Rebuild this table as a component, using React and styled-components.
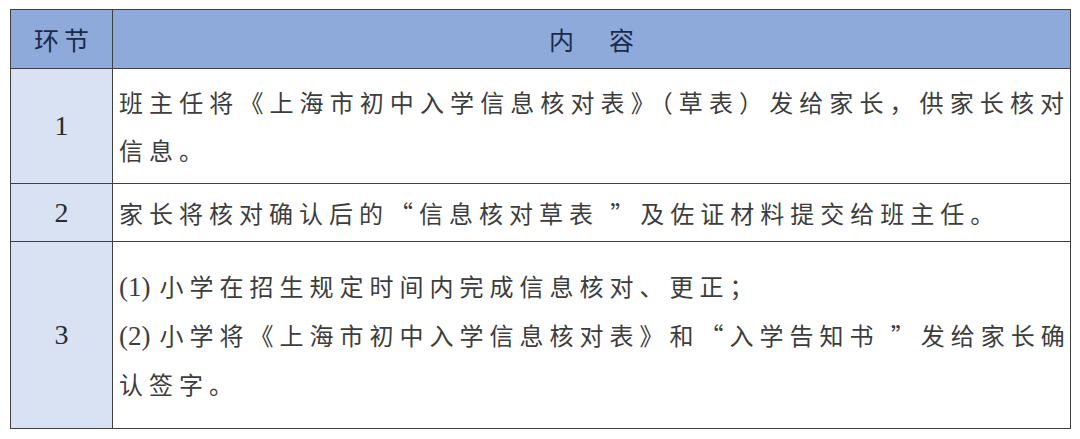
import React from 'react';
import styled, { createGlobalStyle } from 'styled-components';

const GlobalStyle = createGlobalStyle`
  html, body {
    margin: 0;
    padding: 0;
    background: #ffffff;
  }
  body {
    font-family: "Noto Sans CJK SC", "Liberation Serif", serif;
  }
`;

const Page = styled.div`
  padding: 9px 9px 0 10px;
`;

const Table = styled.table`
  width: 1061px;
  border-collapse: collapse;
  table-layout: fixed;
  border: 1.5px solid #3f3f3f;
`;

const HeadCell = styled.th`
  height: 58px;
  padding: 0;
  background: #8eaadb;
  border: 1.5px solid #3f3f3f;
  color: #1c2a48;
  font-family: "Noto Sans CJK SC", sans-serif;
  font-weight: 400;
  font-size: 25px;
  letter-spacing: 5px;
  text-indent: 5px;
  text-align: center;
  vertical-align: middle;
`;

const Row = styled.tr`
  height: ${p => p.h}px;
`;

const StepCell = styled.td`
  padding: 0;
  background: #d9e2f3;
  border: 1.5px solid #3f3f3f;
  color: #2b2b2b;
  font-family: "Liberation Serif", serif;
  font-size: 28px;
  text-align: center;
  vertical-align: middle;
`;

const ContentCell = styled.td`
  padding: 0 6px 0 6px;
  border: 1.5px solid #3f3f3f;
  color: #3d3d3d;
  font-family: "Noto Sans CJK SC", sans-serif;
  font-size: 24px;
  letter-spacing: 6px;
  vertical-align: middle;
`;

const Line = styled.div`
  line-height: 48px;
  white-space: nowrap;
  text-align: ${p => (p.full ? 'justify' : 'left')};
  text-align-last: ${p => (p.full ? 'justify' : 'left')};
  margin-right: -6px;
`;

const Num = styled.span`
  font-family: "Liberation Serif", serif;
  font-size: 27px;
  letter-spacing: 0;
  margin-right: 9px;
`;

const rows = [
  {
    step: '1',
    h: 115,
    lines: [
      { text: '班主任将《上海市初中入学信息核对表》（草表）发给家长，供家长核对', full: true },
      { text: '信息。' },
    ],
  },
  {
    step: '2',
    h: 58,
    lines: [{ text: '家长将核对确认后的“信息核对草表 ”及佐证材料提交给班主任。' }],
  },
  {
    step: '3',
    h: 187,
    lines: [
      { num: '(1)', text: '小学在招生规定时间内完成信息核对、更正；' },
      { num: '(2)', text: '小学将《上海市初中入学信息核对表》和“入学告知书 ”发给家长确', full: true },
      { text: '认签字。' },
    ],
  },
];

const App = () => (
  <Page>
    <GlobalStyle />
    <Table>
      <colgroup>
        <col style={{ width: 102 }} />
        <col />
      </colgroup>
      <thead>
        <tr>
          <HeadCell>环节</HeadCell>
          <HeadCell>内　容</HeadCell>
        </tr>
      </thead>
      <tbody>
        {rows.map(row => (
          <Row key={row.step} h={row.h}>
            <StepCell>{row.step}</StepCell>
            <ContentCell>
              {row.lines.map((line, i) => (
                <Line key={i} full={line.full}>
                  {line.num && <Num>{line.num}</Num>}
                  {line.text}
                </Line>
              ))}
            </ContentCell>
          </Row>
        ))}
      </tbody>
    </Table>
  </Page>
);

export default App;
